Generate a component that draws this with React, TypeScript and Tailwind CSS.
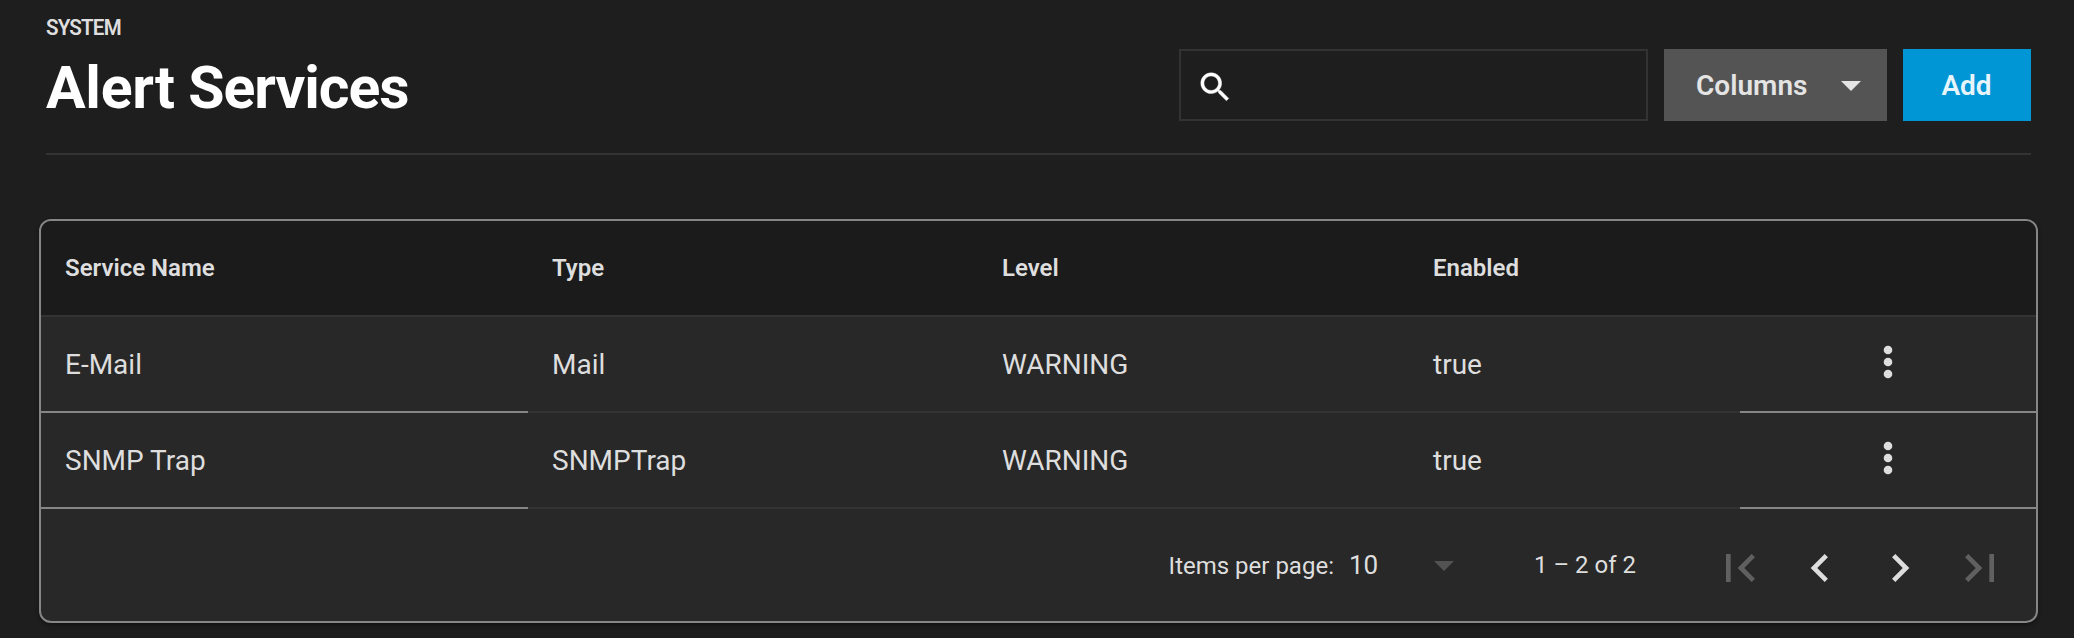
const columns = ["Service Name", "Type", "Level", "Enabled"];

const services = [
  { name: "E-Mail", type: "Mail", level: "WARNING", enabled: "true" },
  { name: "SNMP Trap", type: "SNMPTrap", level: "WARNING", enabled: "true" },
];

const pagerPaths = [
  { label: "First page", d: "M18.41 16.59L13.82 12l4.59-4.59L17 6l-6 6 6 6zM6 6h2v12H6z", disabled: true },
  { label: "Previous page", d: "M15.41 7.41L14 6l-6 6 6 6 1.41-1.41L10.83 12z", disabled: false },
  { label: "Next page", d: "M10 6L8.59 7.41 13.17 12l-4.58 4.59L10 18l6-6z", disabled: false },
  { label: "Last page", d: "M5.59 7.41L10.18 12l-4.59 4.59L7 18l6-6-6-6zM16 6h2v12h-2z", disabled: true },
];

function Caret({ className }: { className: string }) {
  return (
    <svg viewBox="0 0 20 10" className={className} fill="currentColor">
      <path d="M0 0h20L10 10z" />
    </svg>
  );
}

function PageHeader() {
  return (
    <header className="mr-[43px] ml-[46px] flex h-[155px] justify-between border-b-2 border-[#333333]">
      <div className="pt-3.5">
        <div className="h-7 origin-left scale-x-[0.935] text-[22px] leading-7 font-semibold tracking-[-0.9px] text-[#dedede]">
          SYSTEM
        </div>
        <h1 className="mt-2.5 text-[59px] leading-[72px] font-bold tracking-[-1.05px] whitespace-nowrap text-white">
          <span className="tracking-[-0.3px]">Alert</span> Services
        </h1>
      </div>
      <div className="mt-[49px] flex h-[72px] gap-4">
        <label className="flex w-[469px] items-center border-2 border-[#333333] pt-1 pl-[15px]">
          <svg
            viewBox="0 0 24 24"
            className="size-[38.4px] shrink-0 text-white"
            fill="currentColor"
            stroke="currentColor"
            strokeWidth="0.25"
          >
            <path d="M15.5 14h-.79l-.28-.27C15.41 12.59 16 11.11 16 9.5 16 5.91 13.09 3 9.5 3S3 5.91 3 9.5 5.91 16 9.5 16c1.61 0 3.09-.59 4.23-1.57l.27.28v.79l5 4.99L20.49 19l-4.99-5zm-6 0C7.01 14 5 11.99 5 9.5S7.01 5 9.5 5 14 7.01 14 9.5 11.99 14 9.5 14z" />
          </svg>
          <input aria-label="Search" className="min-w-0 flex-1 bg-transparent outline-none" />
        </label>
        <button className="flex w-[223px] items-center justify-between bg-[#545454] pt-0.5 pr-[26px] pl-8 text-[28px] font-semibold text-[#e4e4e4]">
          <span>Columns</span>
          <Caret className="h-2.5 w-5" />
        </button>
        <button className="flex w-32 items-center justify-center bg-[#0095d5] pt-px pr-px text-[28px] font-semibold text-[#e6f4fb]">
          Add
        </button>
      </div>
    </header>
  );
}

function ServiceTable() {
  return (
    <div>
      <div className="grid h-24 grid-cols-[487px_450px_431px_331px_1fr] items-center border-b-2 border-[#333333] bg-[#1b1b1b] text-2xl font-semibold">
        {columns.map((title) => (
          <div key={title} className="pl-6">
            {title}
          </div>
        ))}
      </div>
      {services.map((service) => (
        <div key={service.name} className="grid h-24 grid-cols-[487px_450px_431px_331px_1fr] text-[28px]">
          <div className="flex items-center border-b-2 border-[#868686] pt-0.5 pl-6">{service.name}</div>
          <div className="flex items-center border-b-2 border-[#333333] pt-0.5 pl-6">{service.type}</div>
          <div className="flex items-center border-b-2 border-[#333333] pt-0.5 pl-6">{service.level}</div>
          <div className="flex items-center border-b-2 border-[#333333] pt-0.5 pl-6">{service.enabled}</div>
          <div className="flex items-center justify-center border-b-2 border-[#868686] pr-px pb-1">
            <button aria-label="Service actions">
              <svg viewBox="0 0 24 24" className="size-12" fill="currentColor">
                <circle cx="12" cy="6" r="2.15" />
                <circle cx="12" cy="12" r="2.15" />
                <circle cx="12" cy="18" r="2.15" />
              </svg>
            </button>
          </div>
        </div>
      ))}
    </div>
  );
}

function Paginator() {
  return (
    <div className="flex h-28 items-center justify-end pr-7 text-2xl whitespace-nowrap">
      <span className="mr-[15px] pt-0.5">Items per page:</span>
      <span className="w-[85px] pt-px text-[26px]">10</span>
      <Caret className="mt-0.5 mr-20 h-2.5 w-5 text-[#535353]" />
      <span className="mr-[76px]">1 – 2 of 2</span>
      <div className="flex gap-6 pt-1.5">
        {pagerPaths.map(({ label, d, disabled }) => (
          <button key={label} aria-label={label} className={disabled ? "text-[#606060]" : "text-[#dedede]"}>
            <svg viewBox="0 0 24 24" className="size-14" fill="currentColor">
              <path d={d} />
            </svg>
          </button>
        ))}
      </div>
    </div>
  );
}

export default function App() {
  return (
    <main className="h-[638px] overflow-hidden bg-[#1e1e1e] font-[Roboto,'Liberation_Sans',sans-serif] text-[#dedede]">
      <PageHeader />
      <section className="mt-16 ml-[39px] w-[1999px] overflow-hidden rounded-[12px] border-2 border-[#868686] bg-[#282828] shadow-[0_2px_4px_rgba(0,0,0,0.4)]">
        <ServiceTable />
        <Paginator />
      </section>
    </main>
  );
}
